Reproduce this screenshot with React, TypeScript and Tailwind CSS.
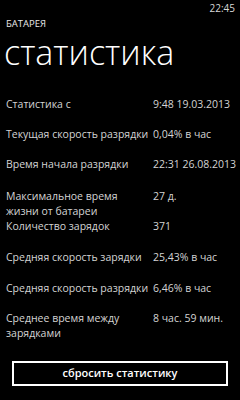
import React from "react";

const rows: { label: string[]; value: string; mt: string }[] = [
  { label: ["Статистика с"], value: "9:48 19.03.2013", mt: "mt-[27px]" },
  { label: ["Текущая скорость разрядки"], value: "0,04% в час", mt: "mt-[15px]" },
  { label: ["Время начала разрядки"], value: "22:31 26.08.2013", mt: "mt-[15px]" },
  { label: ["Максимальное время", "жизни от батареи"], value: "27 д.", mt: "mt-[17px]" },
  { label: ["Количество зарядок"], value: "371", mt: "mt-0" },
  { label: ["Средняя скорость зарядки"], value: "25,43% в час", mt: "mt-[16px]" },
  { label: ["Средняя скорость разрядки"], value: "6,46% в час", mt: "mt-[16px]" },
  { label: ["Среднее время между", "зарядками"], value: "8 час. 59 мин.", mt: "mt-[15px]" },
];

export default function App() {
  return (
    <div
      className="w-[240px] h-[400px] bg-black text-white overflow-hidden flex flex-col"
      style={{ fontFamily: '"Open Sans", "Noto Sans", sans-serif' }}
    >
      <div className="flex justify-end pr-[5px] pt-[2px] h-[15px] text-[10px] leading-[13px] text-[#d8d8d8]">
        22:45
      </div>
      <div className="pl-[6px] mt-[3px] text-[9.5px] leading-[12px] text-[#e8e8e8]">БАТАРЕЯ</div>
      <div className="pl-[4px] mt-[4px] text-[34px] leading-[36px] font-light text-white">статистика</div>
      <div className="flex flex-col">
        {rows.map((r, i) => (
          <div key={i} className={`flex ${r.mt} text-[10.5px] leading-[15px] text-[#d4d4d4]`}>
            <div className="w-[147px] pl-[6px] shrink-0">
              {r.label.map((l, j) => (
                <div key={j} className="whitespace-nowrap">{l}</div>
              ))}
            </div>
            <div className="whitespace-nowrap pl-[6px]">{r.value}</div>
          </div>
        ))}
      </div>
      <div className="mx-[12px] mt-[20px] h-[25px] border-2 border-white flex items-center justify-center text-[11px] font-semibold text-white">
        сбросить статистику
      </div>
    </div>
  );
}
